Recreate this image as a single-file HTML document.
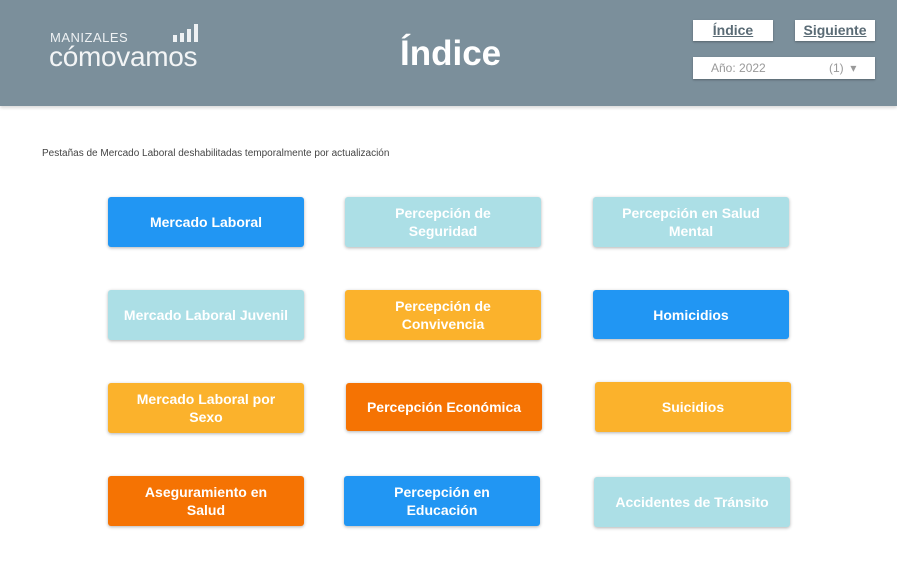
<!DOCTYPE html><html><head><meta charset="utf-8"><style>
body{margin:0;width:897px;height:567px;background:#fff;font-family:"Liberation Sans",Arial,sans-serif;position:relative;overflow:hidden}
.hdr{position:absolute;left:0;top:0;width:897px;height:106px;background:#7b8f9b;box-shadow:0 2px 3px rgba(0,0,0,.15)}
.b{position:absolute;width:196px;height:50px;border-radius:3px;color:#fff;font-weight:bold;font-size:14px;display:flex;align-items:center;justify-content:center;text-align:center;line-height:18px;box-shadow:0 1px 3px rgba(0,0,0,.3)}
.bl{background:#2196f3}.lt{background:#acdfe6}.ye{background:#fbb22c}.or{background:#f57303}
.nav{position:absolute;background:#fff;color:#5a6b75;font-size:14px;font-weight:bold;text-decoration:underline;text-align:center;height:21px;line-height:21px;box-shadow:0 1px 2px rgba(0,0,0,.3)}
</style></head><body>
<div class="hdr">
<div style="position:absolute;left:50px;top:30px;color:#eef1f3;font-size:13px;letter-spacing:0.5px">MANIZALES</div>
<div style="position:absolute;left:49px;top:41px;color:#f3f5f6;font-size:28px;letter-spacing:-0.3px">cómovamos</div>
<svg style="position:absolute;left:172px;top:23px" width="30" height="20"><rect x="1" y="12" width="4" height="7" fill="#eef1f3"/><rect x="8" y="10" width="4" height="9" fill="#eef1f3"/><rect x="15" y="6" width="4" height="13" fill="#eef1f3"/><rect x="22" y="1" width="4" height="18" fill="#eef1f3"/></svg>
<div style="position:absolute;left:400px;top:34px;color:#fff;font-size:35px;font-weight:bold">Índice</div>
<div class="nav" style="left:693px;top:20px;width:80px">Índice</div>
<div class="nav" style="left:795px;top:20px;width:80px">Siguiente</div>
<div style="position:absolute;left:693px;top:57px;width:182px;height:22px;background:#fff;box-shadow:0 1px 2px rgba(0,0,0,.3);font-size:12px;color:#999;line-height:22px"><span style="position:absolute;left:18px">Año: 2022</span><span style="position:absolute;left:136px">(1) &nbsp;▾</span></div>
</div>
<div style="position:absolute;left:42px;top:148px;font-size:10px;color:#444">Pestañas de Mercado Laboral deshabilitadas temporalmente por actualización</div>
<div class="b bl" style="left:108px;top:197px">Mercado Laboral</div>
<div class="b lt" style="left:345px;top:197px">Percepción de<br>Seguridad</div>
<div class="b lt" style="left:593px;top:197px">Percepción en Salud<br>Mental</div>
<div class="b lt" style="left:108px;top:290px">Mercado Laboral Juvenil</div>
<div class="b ye" style="left:345px;top:290px">Percepción de<br>Convivencia</div>
<div class="b bl" style="left:593px;top:290px;height:49px">Homicidios</div>
<div class="b ye" style="left:108px;top:383px">Mercado Laboral por<br>Sexo</div>
<div class="b or" style="left:346px;top:383px;height:48px">Percepción Económica</div>
<div class="b ye" style="left:595px;top:382px">Suicidios</div>
<div class="b or" style="left:108px;top:476px">Aseguramiento en<br>Salud</div>
<div class="b bl" style="left:344px;top:476px">Percepción en<br>Educación</div>
<div class="b lt" style="left:594px;top:477px">Accidentes de Tránsito</div>
</body></html>
